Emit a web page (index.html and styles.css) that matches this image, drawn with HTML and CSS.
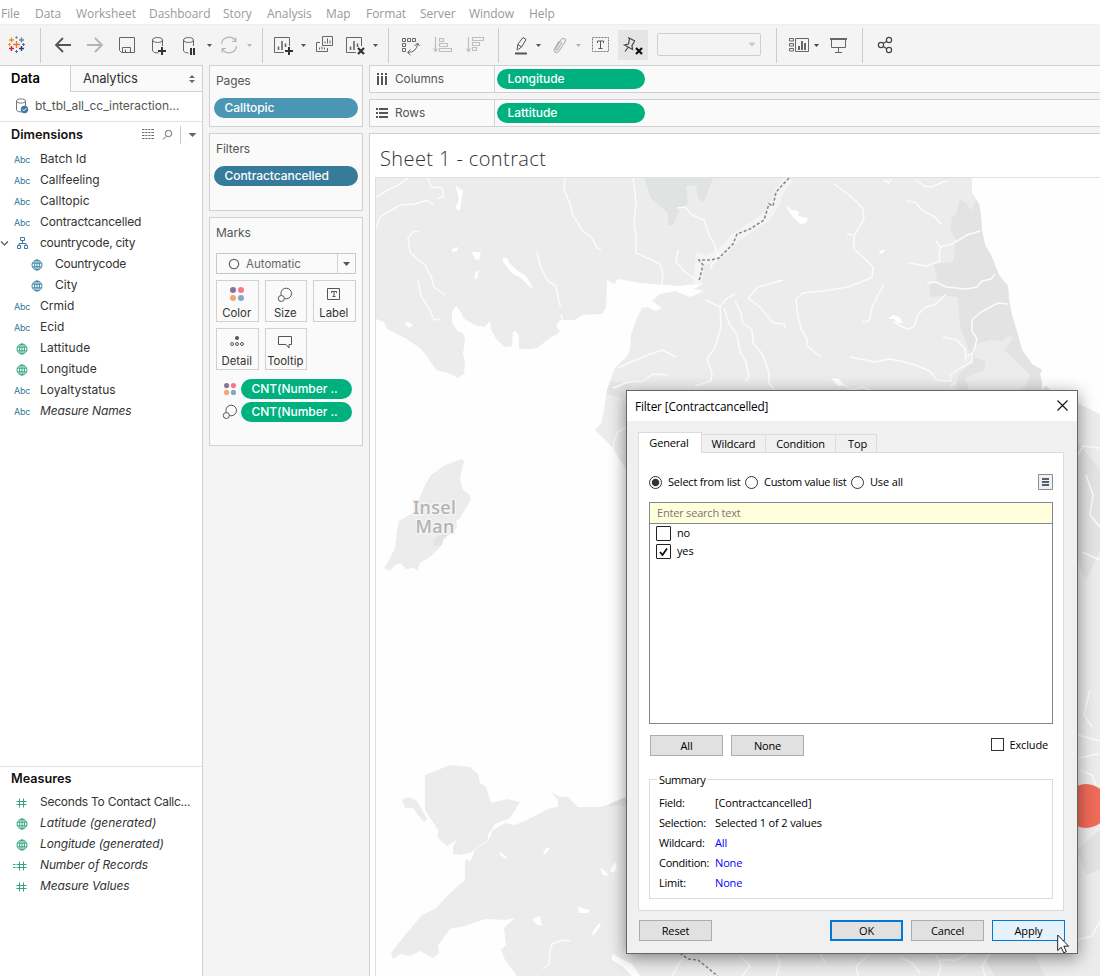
FILE: index.html
```html
<!DOCTYPE html>
<html lang="en">
<head>
<meta charset="utf-8">
<title>Sheet 1 - contract</title>
<link rel="stylesheet" href="styles.css">
</head>
<body>
<svg class="defs" width="0" height="0">
  <defs>
    <symbol id="globe" viewBox="0 0 12 12"><g fill="none" stroke="currentColor" stroke-width="1"><circle cx="6" cy="6" r="5"/><ellipse cx="6" cy="6" rx="2.4" ry="5"/><path d="M1.5 4.2h9M1.5 7.8h9M6 1v10"/></g></symbol>
    <symbol id="hash" viewBox="0 0 16 12"><path d="M6.5 1.5v9M10.500 1.500v9M3.500 4.500h10M3.500 7.500h10" fill="none" stroke="currentColor"/></symbol>
    <symbol id="eqhash" viewBox="0 0 16 12"><path d="M6.500 1.500v9M10.500 1.500v9M3.500 4.500h10M3.500 7.500h10M0 4.500h2.500M0 7.500h2.500" fill="none" stroke="currentColor"/></symbol>
    <symbol id="dots" viewBox="0 0 14 14"><circle cx="3" cy="3" r="3" fill="#8a7199"/><circle cx="11" cy="3" r="3" fill="#f77783"/><circle cx="3" cy="11" r="3" fill="#f5a572"/><circle cx="11" cy="11" r="3" fill="#82a6cf"/></symbol>
    <symbol id="size" viewBox="0 0 16 16"><g stroke="#555" fill="#fafafa"><circle cx="9.200" cy="6.500" r="5.300"/><circle cx="4.300" cy="11.500" r="3"/></g></symbol>
  </defs>
</svg>

<nav class="menu">
  <span class="m-file">File</span><span class="m-data">Data</span><span class="m-work">Worksheet</span><span class="m-dash">Dashboard</span><span class="m-story">Story</span><span class="m-ana">Analysis</span><span class="m-map">Map</span><span class="m-fmt">Format</span><span class="m-srv">Server</span><span class="m-win">Window</span><span class="m-help">Help</span>
</nav>

<div class="toolbar">
  <svg width="40" height="41" viewBox="0 24 40 41" fill="none" stroke-width="1.400">
    <path d="M16.500 41v7M13 44.500h7" stroke="#e8762c"/>
    <path d="M11.500 37.500v5M9 40h5" stroke="#eb9129"/><path d="M21.500 37.500v5M19 40h5" stroke="#5b879b"/>
    <path d="M11.500 46v5M9 48.500h5" stroke="#c7283a"/><path d="M21.500 46v5M19 48.500h5" stroke="#1f457e"/>
    <g stroke-width="1"><path d="M16.500 36v3M15 37.500h3" stroke="#7199a6"/><path d="M16.500 50v3M15 51.500h3" stroke="#5c6692"/><path d="M9.500 43v3M8 44.500h3" stroke="#eb9129"/><path d="M23.500 43v3M22 44.500h3" stroke="#5c6692"/></g>
  </svg>
  <i class="sep"></i>
  <svg width="38" height="41" viewBox="41 24 38 41" fill="none" stroke="#555" stroke-width="1.800"><path d="M71 45H56M63 38l-7 7 7 7"/></svg>
  <svg width="32" height="41" viewBox="79 24 32 41" fill="none" stroke="#b4b4b4" stroke-width="1.800"><path d="M87 45h15M95 38l7 7-7 7"/></svg>
  <svg width="32" height="41" viewBox="111 24 32 41" fill="none" stroke="#666"><path d="M119.500 37.500h15v15h-13l-2-2zM122.500 52v-4.500h8V52M125.500 52v-2.500"/></svg>
  <svg width="32" height="41" viewBox="143 24 32 41" fill="none" stroke="#666"><path d="M152.500 40v11q1 2 6 2M152.500 40c0 3.300 10 3.300 10 0s-10-3.300-10 0M162.500 40v6"/><path d="M162 47v8M158 51h8" stroke="#333" stroke-width="2"/></svg>
  <svg width="28" height="41" viewBox="175 24 28 41" fill="none" stroke="#666"><path d="M183.500 40v11q1 2 5 2M183.500 40c0 3.300 10 3.300 10 0s-10-3.300-10 0M193.500 40v6"/><path d="M191 48v7M194 48v7" stroke="#333" stroke-width="2"/></svg>
  <svg width="12" height="41" viewBox="203 24 12 41"><path d="M207 44h5l-2.500 3z" fill="#555"/></svg>
  <svg width="29" height="41" viewBox="215 24 29 41" fill="none" stroke="#b4b4b4" stroke-width="1.200"><path d="M221.500 44a7.500 7.500 0 0 1 14-3M236.500 46a7.500 7.500 0 0 1-14 3M235.800 37.500v4h-4M222.200 52.500v-4h4"/></svg>
  <svg width="18" height="41" viewBox="244 24 18 41"><path d="M247 44h5l-2.500 3z" fill="#b4b4b4"/></svg>
  <i class="sep"></i>
  <svg width="35" height="41" viewBox="263 24 35 41" fill="none" stroke="#666"><path d="M284 52.500h-9.500v-15h15V46" /><path d="M278.500 50v-3.500M282 50v-9M285.500 47v-3.500" stroke-width="1.600"/><path d="M289 47v8M285 51h8" stroke="#333" stroke-width="2"/></svg>
  <svg width="12" height="41" viewBox="298 24 12 41"><path d="M301 44h5l-2.500 3z" fill="#555"/></svg>
  <svg width="30" height="41" viewBox="310 24 30 41" fill="none" stroke="#666"><path d="M322.500 36.500h10v9h-10zM320 42.500h-3.500v9h11V48M319.500 49.500v-2M322 49.500v-3M324.500 49.500v-2M325 43.500v-2M327.500 43.500v-5M330 43.500v-3"/></svg>
  <svg width="30" height="41" viewBox="340 24 30 41" fill="none" stroke="#666"><path d="M356 52.500h-9.500v-15h15V46"/><path d="M350.500 50v-3.500M354 50v-9M357.500 47v-3.500" stroke-width="1.600"/><path d="M358 48l6 6M364 48l-6 6" stroke="#333" stroke-width="2.200"/></svg>
  <svg width="18" height="41" viewBox="370 24 18 41"><path d="M373 44h5l-2.500 3z" fill="#555"/></svg>
  <i class="sep"></i>
  <svg width="37" height="41" viewBox="389 24 37 41" fill="none" stroke="#666"><path d="M402.500 38.500h3v3h-3zM407.500 38.500h3v3h-3zM412.500 38.500h3v3h-3zM402.500 43.500h3v3h-3zM402.500 48.500h3v3h-3z"/><path d="M408 52.500q9-.500 9.500-9M410.500 49.500l-3 3 3 2.500M414.500 46l3-3 2 3"/></svg>
  <svg width="34" height="41" viewBox="426 24 34 41" fill="none" stroke="#bfbfbf" stroke-width="1.200"><path d="M435.500 37v14M433.500 48.500l2 3 2-3M439.500 38.500h4v3h-4zM439.500 43.500h8v3h-8zM439.500 48.500h12v3h-12z"/></svg>
  <svg width="38" height="41" viewBox="460 24 38 41" fill="none" stroke="#bfbfbf" stroke-width="1.200"><path d="M468.500 37v14M466.500 48.500l2 3 2-3M472.500 37.500h11v3h-11zM472.500 42.500h7v3h-7zM472.500 47.500h4v3h-4z"/></svg>
  <i class="sep"></i>
  <svg width="33" height="41" viewBox="499 24 33 41" fill="none" stroke="#555"><path d="M517 49.500l1-5.500 5-6.500 3 2-4.500 7.500-4 3zM518 44.500l3.500 2.500"/><path d="M515 53.500h12" stroke-width="2"/></svg>
  <svg width="13" height="41" viewBox="532 24 13 41"><path d="M536 44h5l-2.500 3z" fill="#555"/></svg>
  <svg width="27" height="41" viewBox="545 24 27 41" fill="none" stroke="#b4b4b4" stroke-width="1.200"><path d="M562 42l-4 7c-1 2-3 1-2-1l5-8c2-3 6-1 4 2l-6 9c-2 3-6 1-4.500-2l4.500-8"/></svg>
  <svg width="14" height="41" viewBox="572 24 14 41"><path d="M576 44h5l-2.500 3z" fill="#b4b4b4"/></svg>
  <svg width="32" height="41" viewBox="586 24 32 41" fill="none" stroke="#777"><path d="M592.500 37.500h16v14h-16z" stroke-dasharray="2 1"/><path d="M597.500 43v-2h6v2M600.500 41v8M598.500 48.500h4" stroke="#555" /></svg>
  <span class="pin"><svg width="30" height="30" viewBox="618 30 30 30" fill="none" stroke="#444" stroke-width="1.200"><path d="M628 37.500l7 3.500M629.500 38.500l-1 5.500-4 1 8 4.500-.5-4 2.500-4M628 47.500l-3 4"/><path d="M636 48l6 6M642 48l-6 6" stroke="#111" stroke-width="2.200"/></svg></span>
  <span class="select"><svg width="8" height="5" viewBox="0 0 8 5"><path d="M.5.5h7L4 4.500z" fill="#c9c9c9"/></svg></span>
  <i class="sep"></i>
  <svg width="34" height="41" viewBox="777 24 34 41" fill="none" stroke="#666"><path d="M789.500 38.500h4v2.500h-4zM789.500 43.500h4v2.500h-4zM789.500 48.500h4v2.500h-4zM795.500 38.500h13v13h-13z"/><path d="M799 50v-4M802 50v-9M805 50v-7" stroke-width="2"/></svg>
  <svg width="12" height="41" viewBox="811 24 12 41"><path d="M814 44h5l-2.500 3z" fill="#444"/></svg>
  <svg width="39" height="41" viewBox="823 24 39 41" fill="none" stroke="#666"><path d="M830 39h17" stroke-width="2"/><path d="M831.500 39v8.500h14V39M838.500 48v4M835 52.500h7"/></svg>
  <i class="sep"></i>
  <svg width="40" height="41" viewBox="863 24 40 41" fill="none" stroke="#444" stroke-width="1.200"><circle cx="881" cy="45" r="2.600"/><circle cx="889" cy="40" r="2.600"/><circle cx="889" cy="50" r="2.600"/><path d="M883.200 43.500l3.600-2.200M883.200 46.500l3.600 2.200"/></svg>
</div>

<main class="workspace">
  <aside class="sidebar">
    <div class="tabs"><div class="tab-data">Data</div><div class="tab-analytics"><span>Analytics</span><svg width="6" height="8" viewBox="0 0 6 8"><path d="M0 3h6L3 0zM0 5h6L3 8z" fill="#5f6b7a"/></svg></div></div>
    <div class="source">
      <svg width="14" height="16" viewBox="0 0 14 16" fill="none"><path d="M1.500 3v9q1 2 5 2M1.500 3c0 2.800 9 2.800 9 0s-9-2.800-9 0M10.500 3v5" stroke="#777"/><circle cx="9.500" cy="11.500" r="3.700" fill="#3a7ca0"/><path d="M7.700 11.500l1.300 1.300 2.300-2.600" stroke="#fff"/></svg>
      <span>bt_tbl_all_cc_interaction...</span>
    </div>
    <section class="dims">
      <header><b>Dimensions</b>
        <svg width="60" height="22" viewBox="141 124 60 22" fill="none" stroke="#666"><path d="M142 129.500h12M142 132.500h12M142 135.500h12M142 138.500h12" stroke-dasharray="3 .3"/><path d="M144.500 129v10M147.500 129v10M150.500 129v10" stroke="#fff" stroke-width=".6"/><circle cx="168.500" cy="133.500" r="3.200"/><path d="M166 136.500l-3 3"/><path d="M180.500 126v18" stroke="#ccc"/><path d="M188.500 133h8l-4 4z" fill="#666" stroke="none"/></svg>
      </header>
      <ul>
        <li><span class="abc">Abc</span>Batch Id</li>
        <li><span class="abc">Abc</span>Callfeeling</li>
        <li><span class="abc">Abc</span>Calltopic</li>
        <li class="tight"><span class="abc">Abc</span>Contractcancelled</li>
        <li class="tighter"><span class="hier"><svg width="28" height="14" viewBox="0 0 28 14" fill="none"><path d="M1 5.500l3.500 3.500L8 5.500" stroke="#555" stroke-width="1.200"/><path d="M20.500 1.500h4v3h-4zM17.500 9.500h3v3h-3zM24.500 9.500h3v3h-3zM22.500 5v2.500M19 9V7.500h7V9" stroke="#3a7ca0"/></svg></span>countrycode, city</li>
        <li class="sub tighter"><svg class="ico blue"><use href="#globe"/></svg>Countrycode</li>
        <li class="sub"><svg class="ico blue"><use href="#globe"/></svg>City</li>
        <li><span class="abc">Abc</span>Crmid</li>
        <li><span class="abc">Abc</span>Ecid</li>
        <li class="loose"><svg class="ico green"><use href="#globe"/></svg>Lattitude</li>
        <li><svg class="ico green"><use href="#globe"/></svg>Longitude</li>
        <li><span class="abc">Abc</span>Loyaltystatus</li>
        <li class="tight"><span class="abc">Abc</span><em>Measure Names</em></li>
      </ul>
    </section>
    <section class="meas">
      <header><b>Measures</b></header>
      <ul>
        <li class="tighter"><svg class="wico green"><use href="#hash"/></svg>Seconds To Contact Callc...</li>
        <li><svg class="ico green"><use href="#globe"/></svg><em>Latitude (generated)</em></li>
        <li class="tight"><svg class="ico green"><use href="#globe"/></svg><em>Longitude (generated)</em></li>
        <li class="tight"><svg class="wico green"><use href="#eqhash"/></svg><em>Number of Records</em></li>
        <li class="tight"><svg class="wico green"><use href="#hash"/></svg><em>Measure Values</em></li>
      </ul>
    </section>
  </aside>

  <div class="cards">
    <section class="card pages"><h3>Pages</h3><div class="pill light">Calltopic</div></section>
    <section class="card filters"><h3>Filters</h3><div class="pill dark">Contractcancelled</div></section>
    <section class="card marks"><h3>Marks</h3>
      <div class="marktype"><svg width="12" height="12" viewBox="0 0 12 12"><circle cx="6" cy="6" r="4.700" fill="none" stroke="#666" stroke-width="1.200"/></svg><span>Automatic</span><i><svg width="7" height="4" viewBox="0 0 7 4"><path d="M0 0h7L3.500 4z" fill="#555"/></svg></i></div>
      <div class="grid">
        <div><svg width="14" height="14"><use href="#dots"/></svg>Color</div>
        <div><svg width="16" height="16"><use href="#size"/></svg>Size</div>
        <div><svg width="14" height="14" viewBox="0 0 14 14" fill="none" stroke="#555"><path d="M.5 1.500h12v11H.500zM4.500 6V4.500h5V6M7 4.500v5M5.500 9.500h3"/></svg>Label</div>
        <div><svg width="14" height="14" viewBox="0 0 14 14" fill="none" stroke="#555"><circle cx="7" cy="3" r="2" fill="#555" stroke="none"/><circle cx="2" cy="9" r="1.500"/><circle cx="7" cy="9" r="1.500"/><circle cx="12" cy="9" r="1.500"/></svg>Detail</div>
        <div><svg width="14" height="14" viewBox="0 0 14 14" fill="none" stroke="#555"><path d="M.5 1.500h13v8H11v3.500l-3-3.500H.500z"/></svg>Tooltip</div>
      </div>
      <div class="enc"><svg width="12" height="12"><use href="#dots"/></svg><div class="pill green-p">CNT(Number ..</div></div>
      <div class="enc"><svg width="16" height="16"><use href="#size"/></svg><div class="pill green-p">CNT(Number ..</div></div>
    </section>
  </div>

  <div class="view">
    <div class="shelf"><div class="lab"><svg width="12" height="14" viewBox="0 0 12 14"><path d="M2 1v2M6 1v2M10 1v2M2 4v9M6 4v9M10 4v9" stroke="#555" stroke-width="2"/></svg>Columns</div><div class="pill green-p">Longitude</div></div>
    <div class="shelf"><div class="lab"><svg width="12" height="12" viewBox="0 0 12 12"><path d="M0 2h2M0 6h2M0 10h2M3 2h9M3 6h9M3 10h9" stroke="#555" stroke-width="2"/></svg>Rows</div><div class="pill green-p">Lattitude</div></div>
    <div class="sheet">
      <h1>Sheet 1 - contract</h1>
      <div class="map">
<svg width="724" height="798" viewBox="376 178 724 798">
  <defs><clipPath id="land"><path d="M1100 976V414L1075 402 1050 390 1046 386 1042 390 1042 382 1040 374 1042 370 1032 364 1022 350 1018 335 1012 315 1009 300 1008 286 999 275 991 255 985 245 982 230 981 215 979 204 972 192V178H376V319L384 322 387 329 405 338 420 348 428 358 436 370 448 373 458 378 464 374 465 362 463 354 465 340 463 333 457 331 452 322 452 312 456 306 461 312 463 318 475 325 485 327 490 321 491 330 497 340 505 347 512 346 513 332 516 331 519 336 519 349 530 349 537 348 550 338 560 332 556 326 560 320 575 320 582 315 602 314 606 308 607 280 614 284 618 279 640 283 680 286 704 283 694 289 704 291 690 297 675 291 660 294 652 301 662 308 655 311 648 307 642 308 636 320 631 335 630 350 627 356 615 368 607 390 604 410 601 424 595 430 602 437 612 447 620 460 628 472 700 500 700 760 628 796 612 803 600 807 578 807 568 797 560 797 551 792 558 800 558 807 550 808 527 820 515 825 505 823 493 830 488 841 475 850 470 862 467 859 465 862 465 880 450 893 435 909 422 915 405 935 391 953 393 959 400 954 410 956 420 951 433 958 439 953 438 945 442 940 450 929 465 926 485 919 505 920 515 918 504 928 506 945 501 950 505 960 517 976Z"/></clipPath></defs>
  <g fill="#ececec">
    <path d="M425 775L450 765 470 767 478 774 480 783 486 787 491 803 507 799 520 802 510 818 495 824 488 835 488 840 470 853 460 855 453 854 453 846 457 840 447 846 438 838 438 830 425 810Z"/>
    <path d="M402 800L408 797 416 800 422 810 427 819 424 822 417 814 413 808 405 808Z"/>
    <path d="M462 459L464 461 460 478 463 490 469 494 471 499 466 508 460 518 456 521 457 528 443 540 442 545 430 557 420 563 417 571 414 568 406 569 400 563 395 565 390 571 384 568 388 562 395 548 397 530 399 521 413 513 425 485 431 475 445 465Z"/>
    <path d="M433 540L440 535 448 533 443 540 442 545 434 546Z" fill="#e2e3e3"/>
  </g>
  <g clip-path="url(#land)">
    <path d="M376 178h724v798H376z" fill="#ececec"/>
    <path d="M645 178h68l-9 24-6-3-2-14-10 1 2 18-9 6-6 15-5 0 0-12-18-16z" fill="#dfe3e2"/>
    <path d="M960 199L966 203 971 211 976 200 990 200 1060 380 1060 395 955 395 958 375 972 362 967 345 961 330 957 297 945 296 930 297 930 285 937 280 934 264 953 262 956 240 950 230 952 218 957 212Z" fill="#e3e3e3"/>
    <path d="M975 345L990 340 1002 341 1010 335 1013 339 1004 350 1015 360 1030 375 1025 386 1015 392 970 392 965 378 985 370 985 361 975 358Z" fill="#ececec"/>
    <path d="M1076 440l24 30v80l-14 30-10-20zM606 380l25 5-4 14-25-6zM609 803l20-10v13h-20zM985 960l25-20 20 5 15 31h-50zM1076 850l24-20v40l-14 5z" fill="#e3e3e3"/>
    <g fill="none" stroke="#f4f4f4" stroke-width="9"><path d="M789 178l-10 14-4 12-8 12-14 10-18 12-15 16-14 6-6-2-1 12-2 14"/></g>
    <g fill="none" stroke="#fbfbfb" stroke-width="1.500" stroke-linejoin="round">
      <path d="M376 197l12-7 12-6 8-6M428 178l3 9 11 1 2 8-7 3M376 228l4-11 20-12 15-1 12-4 7 5"/>
      <path d="M419 232l-5-1-6 7 2 14 7 7 8 6 7 14 2 8 11 8M418 280l3 16 9 14 4 10 6-1"/>
      <path d="M565 178l-1 12 6 14 3 11 9 15 10 8 5 10 4 2M633 178l2 14 1 12-2 18 2 15 0 16 18 8 6 3 3 10-1 10"/>
      <path d="M537 252l4 16 7 13 8 5 3 17 2 4M561 314l2 8"/>
      <path d="M677 208l8-1 7 8 12 5 5 15 6 11 3 10-3 6-3 2-1 5M678 250l-2 12 8 9 12 9"/>
      <path d="M618 368l15-7 15-6 14-5 14 7M613 388l15-6 15-1 10-7 15 1M705 300l15 7 1 20-6 20-8 12 5 14-1 8-16 5M720 307l6-8 9-5M724 308l5 15 8 12 3 17 6 10 3 15-4 4"/>
      <path d="M735 301l6 12 1 9 10 8 1 13 10 12 6 18 0 10 12 15M783 280l-25 7-10 11 12 9 13 16 11 1 2 5"/>
      <path d="M834 184l15 11 8 7 6 7 1 10-10 17 0 13 10 9 9 9-1 10-6 3-18 7-25 4-20 2-7 6 2 18 3 12 6 10 0 7 14 11M847 234l6 1M884 285l-6 10-6 13-3 13-7 1"/>
      <path d="M907 201l8 1 8 9 12 6 5 6h2M916 180l8 6 7 1 12-5 5-1M884 180l5 3 2-4M980 231l-13 4-15 9-12 3-4-6M940 247l-1 8 1 6-8 3-6 2-17-3"/>
      <path d="M927 283l9-1 10 5 21 2 10-2 5-6 9-2 4-5M946 294l-10 10-12 4-6 7-4 12-7 2-14-7M1008 304l-10-1-17 9-9 8 0 11 5 8-4 14-6 3"/>
      <path d="M943 337l14 3 8 9 1 12M972 353v9l-10 5-12 8 1 6-14-1-7-9-15-6-14-4-12-2-14 3-25-5"/>
      <path d="M840 382l12 8 10-3 8 3M950 387l5-5M612 454l2-12 3-9 12-8"/>
      <path d="M1078 455l5-9 17 2M1086 475l7 20-3 20 10 12M1078 735l22 6M1078 758l20-4M1080 770l12 5 4 10M1078 940l14-4 8-15M1090 690l-6 25 8 12"/>
      <path d="M570 941l-8-1-10 4-2 8-1 12-6 5M672 976l8-14 12-10M740 956l10 10-8 10M776 953l4 12-4 11M820 953l5 10M868 955l-12 12 2 9M900 957l12 6 8 10M940 960l16 0 14-7"/>
      <path d="M935 953l6 12-3 11M990 953l-8 14 3 9M1100 560l-18-8"/>
    </g>
    <g fill="#fff">
      <path d="M455 184l3 4 5 2-1 7-2 13h-3l-1-4 3-6-2-9zM503 257l5 2 1 4 9 8 8 5 7 12-3-1-9-9-8-4-10-12zM472 252l9 0-2 8-4-1zM452 249l6-2-1 4-5 1zM476 272l3-2-2 9-3-1zM404 323l4-1 5 3-4 3z"/>
      <path d="M785 205l7 5 7 1-1 5 10 2-2 5-6 1-7-7zM880 251l5-2-2 4-4 1zM888 319l5-4 6 2 4 6h-6l-3-4zM831 378l8 1 5 6-6 1z"/>
      <path d="M447 790l8-6 4 1-6 6-4 2zM500 852l7 5-1 2-6-4zM543 854l3-6 4 0-3 4-3 3zM600 867l7 6 1 3-5-1zM611 868l4-6 2 5-3 6-4-2zM578 906l3 2 9 2-2 3h-9zM532 919l8-3 2 10-6-2zM592 933l7-10 2 2-8 11zM612 954l20 10 8 12h-8l-10-10-10-6z"/>
    </g>
    <path d="M789 178l-13 14-3 14-4-2-5 16-14 9-13 5-4 10-14 14-8 2-12 0 4 5-4 16" fill="none" stroke="#8a8a8a" stroke-width="1.600" stroke-dasharray="3 2"/>
    <path d="M680 953l8 6 10 1 10 8 12 10" fill="none" stroke="#8a8a8a" stroke-width="1.600" stroke-dasharray="3 2"/>
  </g>
  <text class="maplabel"><tspan x="434.500" y="514">Insel</tspan><tspan x="435" y="532.500">Man</tspan></text>
  <circle cx="1086" cy="806" r="22" fill="#f06a58"/>
</svg>
      </div>
    </div>
  </div>
</main>

<div class="dialog">
  <div class="title"><span>Filter [Contractcancelled]</span><svg width="11" height="11" viewBox="0 0 11 11"><path d="M.5.5l10 10M10.500.5l-10 10" stroke="#111" stroke-width="1.100"/></svg></div>
  <div class="dtabs"><span class="on">General</span><span class="t2">Wildcard</span><span class="t3">Condition</span><span class="t4">Top</span></div>
  <div class="pane">
    <div class="radios">
      <i class="radio sel"></i><span class="r1">Select from list</span><i class="radio"></i><span class="r2">Custom value list</span><i class="radio"></i><span>Use all</span>
      <svg class="listbtn" width="15" height="16" viewBox="0 0 15 16"><path d="M.5.5h14v15H.500z" fill="#f0f0f0" stroke="#8e8e8e"/><path d="M4 5h7M4 8h7M4 11h7" stroke="#4f6076" stroke-width="1.800"/></svg>
    </div>
    <div class="list">
      <div class="search">Enter search text</div>
      <div class="opt"><i class="check"></i>no</div>
      <div class="opt"><i class="check"><svg width="13" height="13" viewBox="0 0 13 13"><path d="M3 7l2.500 3L10 3.500" fill="none" stroke="#111" stroke-width="1.800"/></svg></i>yes</div>
    </div>
    <div class="allnone"><span class="btn">All</span><span class="btn">None</span><label><i></i>Exclude</label></div>
    <div class="summary"><span class="legend">Summary</span>
      <dl><dt>Field:</dt><dd>[Contractcancelled]</dd><dt>Selection:</dt><dd>Selected 1 of 2 values</dd><dt>Wildcard:</dt><dd class="link">All</dd><dt>Condition:</dt><dd class="link">None</dd><dt>Limit:</dt><dd class="link">None</dd></dl>
    </div>
  </div>
  <div class="foot"><span class="btn reset">Reset</span><span class="btn ok">OK</span><span class="btn">Cancel</span><span class="btn apply">Apply</span></div>
  <svg class="cursor" width="13" height="20" viewBox="0 0 13 20"><path d="M.7 1v15.500l3.500-3.300 2.500 5.600 2.600-1.200-2.500-5.400h4.800z" fill="#fff" stroke="#222"/></svg>
</div>
</body>
</html>
```
FILE: styles.css
```css
* { box-sizing: border-box; }
body { margin: 0; width: 1100px; height: 976px; overflow: hidden; position: relative; display: flex; flex-direction: column; background: #f4f4f4; font: 13px/20px Inter, sans-serif; color: #333; }
svg { display: block; flex: none; }
i { font-style: normal; }
.defs { position: absolute; }

.menu { height: 24px; flex: none; background: #fff; display: flex; padding: 4px 0 0 1px; font: 12px/20px "Open Sans", sans-serif; letter-spacing: -.05px; color: #999; white-space: nowrap; }
.menu span { flex: none; }
.m-file { width: 34px; } .m-data { width: 41px; } .m-work { width: 73px; } .m-dash { width: 74px; } .m-story { width: 44px; } .m-ana { width: 59px; } .m-map { width: 40px; } .m-fmt { width: 54px; } .m-srv { width: 49px; } .m-win { width: 60px; }

.toolbar { height: 41px; flex: none; display: flex; border-top: 1px solid #eee; }
.toolbar > svg { margin-top: -1px; }
.sep { flex: none; width: 1px; height: 35px; margin-top: 3px; background: #ccc; }
.pin { width: 30px; height: 30px; margin-top: 5px; background: #e5e5e5; }
.select { width: 104px; height: 23px; margin: 8px 15px 0 9px; border: 1px solid #d0d0d0; border-radius: 2px; display: flex; justify-content: flex-end; align-items: center; padding-right: 4px; }

.workspace { flex: 1; min-height: 0; display: grid; grid-template-columns: 203px 154px 731px; column-gap: 6px; }
.sidebar { background: #fff; border-right: 1px solid #d0d0d0; border-top: 1px solid #d0d0d0; display: flex; flex-direction: column; }
.tabs { display: flex; height: 26px; flex: none; line-height: 25px; }
.tab-data { width: 70px; padding-left: 11px; font-weight: 600; color: #000; font-size: 13px; }
.tab-analytics { flex: 1; display: flex; justify-content: space-between; align-items: center; background: #fafafa; border-left: 1px solid #d0d0d0; border-bottom: 1px solid #d0d0d0; padding: 0 7px 0 12px; font-size: 13px; letter-spacing: -.2px; }
.source { height: 30px; flex: none; display: flex; align-items: center; gap: 6px; padding: 0 0 2px 15px; border-bottom: 1px solid #e3e3e3; color: #555; font-size: 12px; }
.sidebar header { display: flex; height: 26px; padding-left: 11px; justify-content: space-between; line-height: 26px; color: #111; font-size: 12.700px; }
.sidebar header b { font-weight: 600; }
.sidebar header svg { margin: 2px 1px 0 0; }
.dims { flex: 1; }
.meas { height: 210px; border-top: 1px solid #e3e3e3; }
.meas header { height: 24px; line-height: 23px; }
ul { list-style: none; margin: 0; padding: 0; }
li { height: 21px; line-height: 21px; display: flex; align-items: center; font-size: 12px; white-space: nowrap; }
.tight { letter-spacing: -.14px; }
.tighter { letter-spacing: -.24px; }
.loose { letter-spacing: .1px; }
.abc { width: 40px; padding: 2px 0 0 14px; font-size: 9px; color: #2f7899; letter-spacing: -.2px; }
.hier { width: 40px; }
.ico { width: 12px; height: 12px; margin: 2px 12px 0 16px; }
.wico { width: 16px; height: 12px; margin: 2px 11px 0 13px; }
.sub .ico { margin-left: 31px; }
.blue { color: #3a86a8; } .green { color: #35a57c; }

.cards { display: flex; flex-direction: column; gap: 6px; }
.card { background: #fafafa; border: 1px solid #d0d0d0; padding: 0 4px; }
.card h3 { margin: 0; padding: 5px 2px 0; font-weight: 400; font-size: 12px; line-height: 20px; color: #555; letter-spacing: -.1px; }
.pages { height: 62px; } .filters { height: 78px; } .marks { height: 229px; padding: 0 6px; }
.marks h3 { padding-left: 0; }
.pill { height: 20px; border-radius: 10px; color: #fff; padding-left: 10.500px; line-height: 19px; font-size: 12px; font-weight: 500; letter-spacing: -.05px; white-space: nowrap; }
.card > .pill { margin-top: 7px; }
.light { background: #4a96b4; } .dark { background: #377b9b; } .green-p { background: #00b180; }
.marktype { margin-top: 10px; height: 21px; border: 1px solid #c8c8c8; display: flex; align-items: center; padding-left: 11px; gap: 6px; font-size: 11.500px; line-height: 19px; color: #666; }
.marktype span { flex: 1; padding-top: 1px; }
.marktype i { width: 18px; height: 19px; border-left: 1px solid #d0d0d0; display: flex; align-items: center; justify-content: center; }
.grid { margin-top: 6px; display: grid; grid-template-columns: 43px 42px 43px; column-gap: 6px; row-gap: 6px; }
.grid div { height: 42px; border: 1px solid #d0d0d0; display: flex; flex-direction: column; align-items: center; justify-content: space-between; padding: 6px 1.500px 0 0; font-size: 11.300px; line-height: 16px; color: #333; white-space: nowrap; }
.enc { display: flex; align-items: center; height: 23px; padding: 0 4px 0 6px; justify-content: space-between; }
.enc:nth-last-child(2) { margin-top: 7px; padding-left: 8px; }
.enc .pill { width: 111px; }

.view { display: flex; flex-direction: column; gap: 6px; }
.shelf { height: 28px; flex: none; background: #fafafa; border: 1px solid #d0d0d0; border-right: 0; display: flex; align-items: center; gap: 2px; }
.lab { width: 125px; height: 26px; border-right: 1px solid #d0d0d0; display: flex; align-items: center; gap: 7px; padding-left: 6px; font-size: 11.800px; color: #555; }
.shelf .pill { width: 148px; }
.sheet { flex: 1; background: #fff; border: 1px solid #d0d0d0; border-width: 1px 0 0 1px; padding-left: 5px; min-height: 0; }
h1 { margin: 0; height: 43px; padding: 12px 0 0 5px; font: 300 20px/26px "Open Sans", sans-serif; letter-spacing: .4px; color: #333; }
.map { border: 1px solid #e0e0e0; border-width: 1px 0 0 1px; background: #fefefe; height: 799px; }
.maplabel { font: 500 18px "Noto Sans", sans-serif; fill: #b2b2b2; text-anchor: middle; letter-spacing: .3px; paint-order: stroke; stroke: #f3f3f3; stroke-width: 3px; }

.dialog { position: absolute; left: 626px; top: 390px; width: 452px; height: 564px; background: #f0f0f0; border: 1px solid #666; box-shadow: 0 4px 16px rgba(0,0,0,.45); font: 11px/20px "Open Sans", sans-serif; color: #000; letter-spacing: -.15px; }
.title { height: 30px; background: #fff; display: flex; justify-content: space-between; align-items: center; padding: 0 9px 1px 8px; font-size: 11.800px; }
.dtabs { display: flex; align-items: flex-end; height: 32px; margin-left: 11px; margin-bottom: -1px; position: relative; }
.dtabs span { height: 19px; line-height: 18px; border: 1px solid #dcdcdc; border-left: 0; border-bottom: 0; text-align: center; }
.dtabs .on { width: 64px; height: 21px; background: #fff; border-left: 1px solid #dcdcdc; line-height: 19px; padding-right: 2px; }
.t2 { width: 64px; } .t3 { width: 70px; } .t4 { width: 41px; padding-left: 3px; }
.dtabs span:not(.on) { margin-bottom: 1px; height: 18px; }
.pane { margin: 0 13px 0 11px; height: 459px; background: #fff; border: 1px solid #dcdcdc; padding: 21px 10px 0; }
.radios { display: flex; align-items: center; height: 16px; }
.radio { width: 13px; height: 13px; border: 1px solid #333; border-radius: 50%; margin-right: 6px; }
.sel { background: radial-gradient(circle, #333 3.200px, #fff 4.200px); }
.r1 { width: 77px; } .r2 { width: 87px; letter-spacing: -.3px; }
.r1, .search { letter-spacing: -.2px; }
.listbtn { margin-left: auto; }
.list { margin-top: 12px; height: 222px; border: 1px solid #828790; }
.search { height: 21px; background: #ffffdc; border-bottom: 1px solid #828790; padding-left: 7px; line-height: 20px; color: #777; }
.opt { height: 18px; display: flex; align-items: center; gap: 6px; padding-left: 6px; }
.check { width: 15px; height: 15px; border: 1px solid #222; border-radius: 1px; background: #fff; }
.allnone { display: flex; gap: 8px; margin: 11px 5px 0 1px; height: 21px; }
.btn { width: 73px; height: 21px; background: #e1e1e1; border: 1px solid #adadad; text-align: center; line-height: 20px; }
.allnone label { margin-left: auto; display: flex; align-items: center; gap: 5px; height: 19px; }
.allnone label i { width: 13px; height: 13px; border: 1px solid #333; }
.summary { margin-top: 23px; height: 120px; border: 1px solid #dcdcdc; padding-left: 9px; }
.legend { display: block; width: 50px; height: 14px; line-height: 14px; margin: -7px 0 0 -2px; padding-left: 2px; background: #fff; letter-spacing: -.4px; }
dl { margin: 6px 0 0; display: grid; grid-template-columns: 56px 1fr; grid-auto-rows: 20px; }
dt { letter-spacing: -.25px; }
dd { margin: 0; } .link { color: #00f; }
.foot { display: flex; gap: 8px; padding: 9px 12px 0; }
.reset { margin-right: 110px; }
.ok { border: 2px solid #0078d7; line-height: 18px; }
.apply { background: #e5f1fb; border-color: #0078d7; }
.cursor { position: absolute; left: 430px; top: 543px; }
```
